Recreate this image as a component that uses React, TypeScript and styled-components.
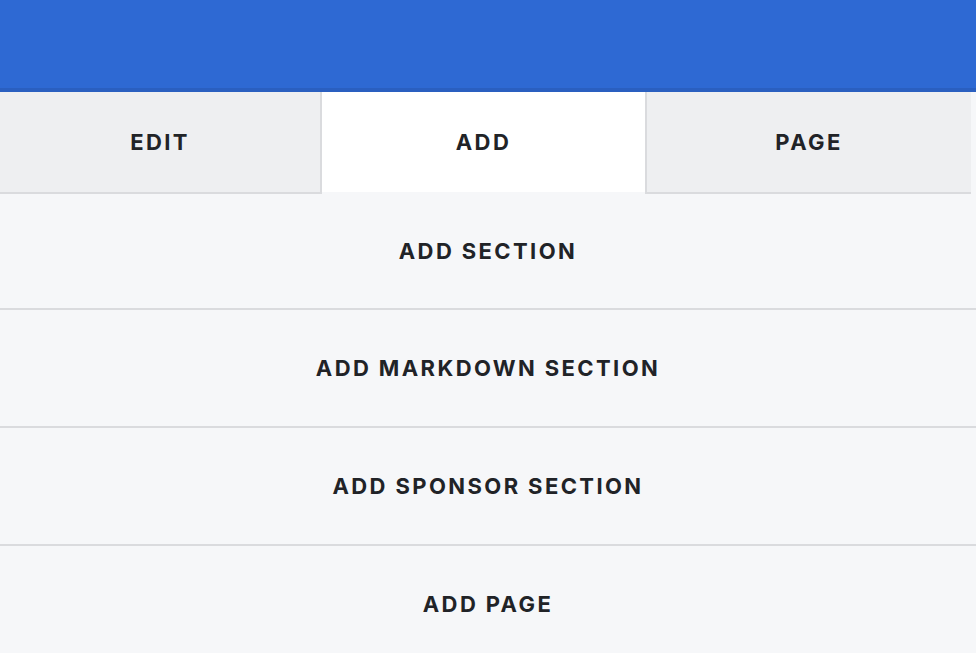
import React from "react";
import styled, { createGlobalStyle } from "styled-components";

const Global = createGlobalStyle`
  html, body { margin: 0; padding: 0; background: #f6f7f9; }
  body { font-family: Inter, "Liberation Sans", Arial, sans-serif; }
  * { box-sizing: border-box; }
`;

const Page = styled.div`
  width: 976px;
  height: 653px;
  overflow: hidden;
  background: #f6f7f9;
  display: flex;
  flex-direction: column;
`;

const Header = styled.header`
  height: 92px;
  flex: none;
  background: #2e69d3;
  border-bottom: 4px solid #2a5fc0;
`;

const TabBar = styled.nav`
  display: grid;
  grid-template-columns: 322px 323px 326px;
  width: 971px;
  flex: none;
`;

const Tab = styled.button<{ $active?: boolean; $side?: "left" | "right" }>`
  height: 102px;
  border: none;
  margin: 0;
  padding: 0;
  display: flex;
  align-items: center;
  justify-content: center;
  font-family: Inter, "Liberation Sans", Arial, sans-serif;
  font-weight: 700;
  font-size: 22px;
  letter-spacing: 2.4px;
  color: #212327;
  background: ${(p) => (p.$active ? "#ffffff" : "#eeeff1")};
  border-bottom: 2px solid ${(p) => (p.$active ? "#f6f7f9" : "#dadbde")};
  border-right: ${(p) => (p.$side === "left" ? "2px solid #dadbde" : "none")};
  border-left: ${(p) => (p.$side === "right" ? "2px solid #dadbde" : "none")};
`;

const List = styled.div`
  display: flex;
  flex-direction: column;
`;

const Row = styled.button`
  height: 118px;
  flex: none;
  border: none;
  border-bottom: 2px solid #dadbde;
  background: #f6f7f9;
  margin: 0;
  padding: 0;
  display: flex;
  align-items: center;
  justify-content: center;
  font-family: Inter, "Liberation Sans", Arial, sans-serif;
  font-weight: 700;
  font-size: 22px;
  letter-spacing: 2.4px;
  color: #212327;

  &:first-child {
    height: 116px;
  }
`;

const items = ["ADD SECTION", "ADD MARKDOWN SECTION", "ADD SPONSOR SECTION", "ADD PAGE"];

export default function App() {
  return (
    <Page>
      <Global />
      <Header />
      <TabBar>
        <Tab $side="left">EDIT</Tab>
        <Tab $active>ADD</Tab>
        <Tab $side="right">PAGE</Tab>
      </TabBar>
      <List>
        {items.map((t) => (
          <Row key={t}>{t}</Row>
        ))}
      </List>
    </Page>
  );
}
